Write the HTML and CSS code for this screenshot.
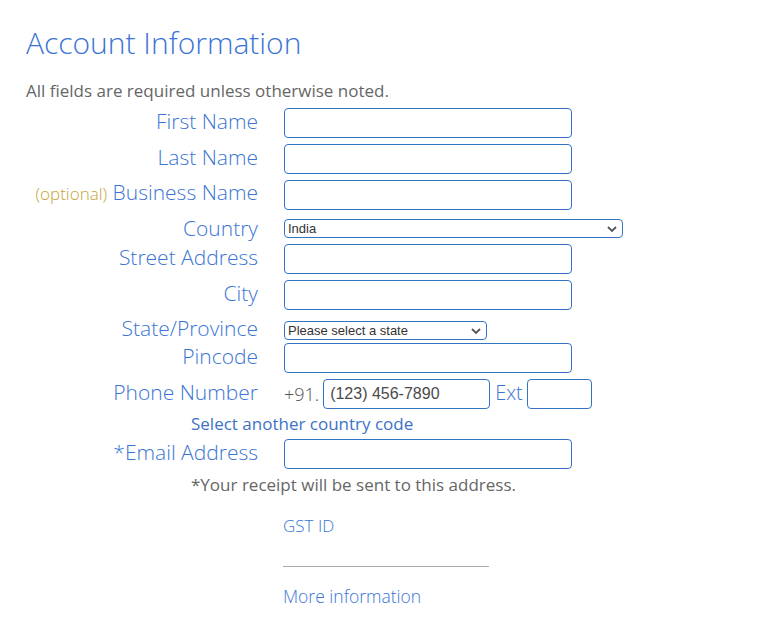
FILE: index.html
```html
<!DOCTYPE html>
<html lang="en">
<head>
<meta charset="utf-8">
<title>Account Information</title>
<link rel="stylesheet" href="styles.css">
</head>
<body>
<div class="page">
  <h1 class="title">Account Information</h1>
  <p class="intro">All fields are required unless otherwise noted.</p>
  <div class="form">
    <div class="row">
      <label class="lbl">First Name</label>
      <input class="txt" type="text">
    </div>
    <div class="row">
      <label class="lbl">Last Name</label>
      <input class="txt" type="text">
    </div>
    <div class="row">
      <label class="lbl"><span class="opt">(optional)</span> Business Name</label>
      <input class="txt" type="text">
    </div>
    <div class="row row-sel row-country">
      <label class="lbl">Country</label>
      <div class="sel sel-country"><span>India</span><svg class="chev" viewBox="0 0 10 6" width="10" height="6"><path d="M1 1 L5 5 L9 1" fill="none" stroke="#555" stroke-width="1.8"/></svg></div>
    </div>
    <div class="row">
      <label class="lbl">Street Address</label>
      <input class="txt" type="text">
    </div>
    <div class="row">
      <label class="lbl">City</label>
      <input class="txt" type="text">
    </div>
    <div class="row row-sel row-state">
      <label class="lbl">State/Province</label>
      <div class="sel sel-state"><span>Please select a state</span><svg class="chev" viewBox="0 0 10 6" width="10" height="6"><path d="M1 1 L5 5 L9 1" fill="none" stroke="#555" stroke-width="1.8"/></svg></div>
    </div>
    <div class="row">
      <label class="lbl">Pincode</label>
      <input class="txt" type="text">
    </div>
    <div class="row">
      <label class="lbl">Phone Number</label>
      <div class="phone">
        <span class="cc">+91.</span>
        <input class="txt tel" type="text" value="(123) 456-7890">
        <span class="ext">Ext</span>
        <input class="txt extin" type="text">
      </div>
    </div>
    <div class="note note-cc">Select another country code</div>
    <div class="row">
      <label class="lbl">*Email Address</label>
      <input class="txt" type="text">
    </div>
    <div class="note note-receipt">*Your receipt will be sent to this address.</div>
    <div class="gst">
      <div class="gst-label">GST ID</div>
      <div class="gst-line"></div>
      <div class="more">More information</div>
    </div>
  </div>
</div>
</body>
</html>
```
FILE: styles.css
```css
html, body {
  margin: 0;
  padding: 0;
  background: #ffffff;
}
.page {
  padding: 0 0 0 26px;
  font-family: "Open Sans", "Liberation Sans", sans-serif;
  color: #555555;
}
.title {
  margin: 0;
  padding-top: 21px;
  font-size: 30px;
  line-height: 44px;
  font-weight: 300;
  color: #3a74d4;
}
.intro {
  margin: 16px 0 0 0;
  font-size: 17px;
  line-height: 20px;
  font-weight: 400;
  color: #666666;
}
.form {
  display: flex;
  flex-direction: column;
  margin-top: 4px;
}
.row {
  display: flex;
  align-items: center;
  height: 36px;
}
.lbl {
  width: 232px;
  margin-right: 26px;
  margin-bottom: 4px;
  text-align: right;
  font-size: 21px;
  font-weight: 300;
  line-height: 28px;
  color: #3a74d4;
  white-space: nowrap;
}
.opt {
  font-size: 17px;
  color: #c4a43a;
}
.txt {
  box-sizing: border-box;
  width: 288px;
  height: 30px;
  margin: 0;
  padding: 1px 6px;
  border: 1px solid #3573c4;
  border-radius: 4px;
  background: #ffffff;
  font-family: "Liberation Sans", Arial, sans-serif;
  font-size: 16px;
  color: #4a4a4a;
  outline: none;
}
.row-country {
  height: 28px;
  align-items: flex-start;
}
.row-country .lbl {
  margin-top: 1px;
  margin-bottom: 0;
}
.row-country .sel {
  margin-top: 6px;
}
.row-state {
  height: 27px;
  align-items: flex-start;
}
.row-state .lbl {
  margin-top: 1px;
  margin-bottom: 0;
}
.row-state .sel {
  margin-top: 8px;
}
.sel {
  box-sizing: border-box;
  height: 19px;
  display: flex;
  align-items: center;
  justify-content: space-between;
  padding: 0 5px 0 3px;
  border: 1px solid #3573c4;
  border-radius: 4px;
  font-family: "Liberation Sans", Arial, sans-serif;
  font-size: 13px;
  color: #333333;
}
.sel-country {
  width: 339px;
}
.sel-state {
  width: 203px;
}
.chev {
  display: block;
}
.phone {
  display: flex;
  align-items: center;
}
.cc {
  font-size: 18px;
  font-weight: 300;
  color: #555555;
  margin-right: 4px;
}
.tel {
  width: 167px;
}
.ext {
  font-size: 20px;
  font-weight: 300;
  color: #3a74d4;
  margin: 0 4px 0 5px;
  position: relative;
  top: -2px;
}
.extin {
  width: 65px;
}
.note {
  margin-left: 165px;
  font-size: 17px;
  line-height: 24px;
  font-weight: 400;
}
.note-cc {
  color: #3d72c6;
}
.note-receipt {
  line-height: 26px;
  color: #666666;
}
.gst {
  margin-left: 257px;
  width: 206px;
}
.gst-label {
  margin-top: 16px;
  font-size: 17px;
  line-height: 24px;
  font-weight: 300;
  color: #3a74d4;
}
.gst-line {
  margin-top: 28px;
  height: 1px;
  background: #aaaaaa;
}
.more {
  margin-top: 17px;
  font-size: 17.5px;
  line-height: 24px;
  font-weight: 300;
  color: #3a74d4;
}
```
